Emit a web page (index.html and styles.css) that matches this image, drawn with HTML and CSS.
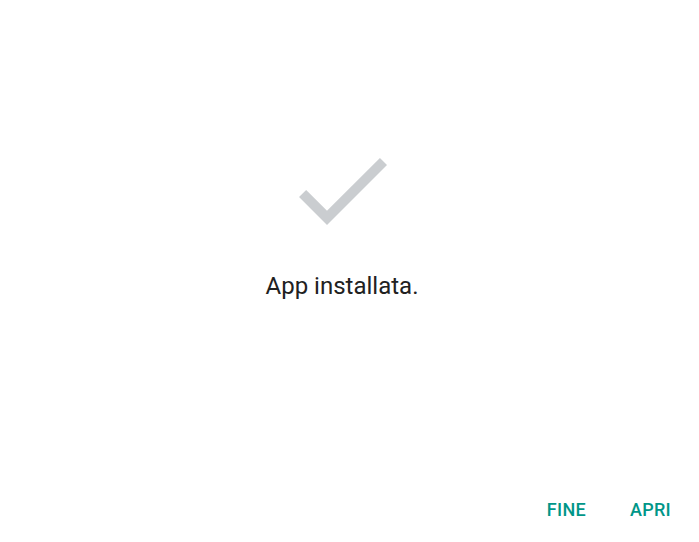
FILE: index.html
```html
<!DOCTYPE html>
<html lang="it">
<head>
  <meta charset="UTF-8" />
  <title>App installata</title>
  <meta name="viewport" content="width=device-width, initial-scale=1.0" />
  <link rel="stylesheet" href="styles.css">
</head>
<body>
  <div class="screen">
    <div class="content">
      <svg class="done-icon" viewBox="0 0 24 24" aria-hidden="true">
        <path d="M9 16.17L4.83 12l-1.42 1.41L9 19 21 7l-1.41-1.41z" />
      </svg>
      <div class="message">App installata.</div>
    </div>

    <div class="actions">
      <button class="text-button">Fine</button>
      <button class="text-button">Apri</button>
    </div>
  </div>
</body>
</html>
```

FILE: styles.css
```css
* {
  box-sizing: border-box;
  font-family: Roboto, "Noto Sans", sans-serif;
}

html, body {
  margin: 0;
  padding: 0;
  background: #ffffff;
}

.screen {
  width: 699px;
  height: 542px;
  display: flex;
  flex-direction: column;
}

.content {
  flex: 1;
  display: flex;
  flex-direction: column;
  align-items: center;
  padding-top: 130px;
  padding-right: 15px;
}

.done-icon {
  width: 120px;
  height: 120px;
  fill: #cacdd0;
}

.message {
  margin-top: 22px;
  font-size: 24px;
  color: #212121;
}

.actions {
  display: flex;
  justify-content: flex-end;
  gap: 20px;
  padding: 0 16px 14px 0;
}

.text-button {
  border: none;
  background: none;
  padding: 8px 12px;
  font-size: 18px;
  font-weight: 500;
  letter-spacing: 0.3px;
  color: #009688;
  text-transform: uppercase;
  cursor: pointer;
}
```
